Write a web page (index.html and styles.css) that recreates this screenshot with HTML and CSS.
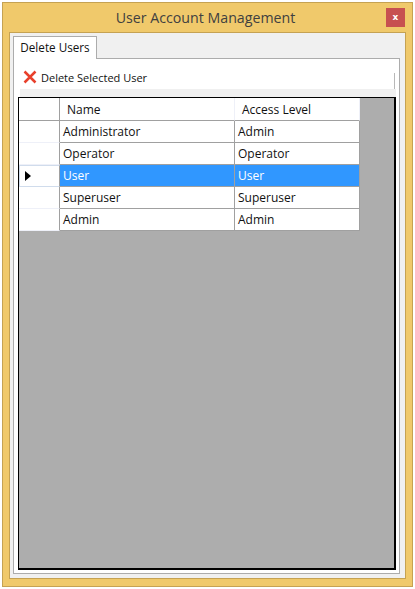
FILE: index.html
```html
<!DOCTYPE html>
<html lang="en">
  <head>
    <title>User Account Management</title>
    <meta charset="utf-8" />
    <link rel="stylesheet" href="styles.css">
  </head>
  <body>
    <div class="ablak">
      <div class="cimsor">
        <span class="cim">User Account Management</span>
        <span class="bezar">x</span>
      </div>
      <div class="tartalom">
        <div class="fulek">
          <div class="ful">Delete Users</div>
        </div>
        <div class="lap">
          <div class="eszkozsor">
            <svg class="ikon" width="14" height="14" viewBox="0 0 14 14">
              <path d="M1.5 1.5 L12.5 12.5 M12.5 1.5 L1.5 12.5" stroke="#e8402c" stroke-width="2.5" fill="none" />
            </svg>
            <span>Delete Selected User</span>
          </div>
          <div class="racs">
            <div class="sor fejlec">
              <div class="sorfej"></div>
              <div class="cella nev">Name</div>
              <div class="cella szint">Access Level</div>
            </div>
            <div class="sor">
              <div class="sorfej"></div>
              <div class="cella nev">Administrator</div>
              <div class="cella szint">Admin</div>
            </div>
            <div class="sor">
              <div class="sorfej"></div>
              <div class="cella nev">Operator</div>
              <div class="cella szint">Operator</div>
            </div>
            <div class="sor kivalasztott">
              <div class="sorfej"><span class="nyil"></span></div>
              <div class="cella nev">User</div>
              <div class="cella szint">User</div>
            </div>
            <div class="sor">
              <div class="sorfej"></div>
              <div class="cella nev">Superuser</div>
              <div class="cella szint">Superuser</div>
            </div>
            <div class="sor">
              <div class="sorfej"></div>
              <div class="cella nev">Admin</div>
              <div class="cella szint">Admin</div>
            </div>
          </div>
        </div>
      </div>
    </div>
  </body>
</html>
```

FILE: styles.css
```css
html, body {
  height: 100%;
}
body {
  margin: 0;
  padding: 2px;
  box-sizing: border-box;
  background: #fff;
  font-family: "Open Sans", "Noto Sans", sans-serif;
  font-size: 12px;
  color: #111;
}
.ablak {
  width: 411px;
  height: 585px;
  box-sizing: border-box;
  border: 1px solid #c5a253;
  background: #f0c96b;
  display: flex;
  flex-direction: column;
  padding: 0 6px 7px 6px;
}
.cimsor {
  height: 29px;
  flex: none;
  box-sizing: border-box;
  padding-right: 4px;
  display: flex;
  align-items: center;
  justify-content: center;
  position: relative;
}
.cim {
  font-size: 14.2px;
  color: #404040;
}
.bezar {
  position: absolute;
  top: 5px;
  right: 1px;
  width: 19px;
  height: 19px;
  background: #c75050;
  color: #fff;
  font-family: "DejaVu Sans", sans-serif;
  font-size: 9px;
  font-weight: bold;
  line-height: 18px;
  text-align: center;
}
.tartalom {
  flex: 1;
  min-height: 0;
  border: 1px solid #c5a253;
  background: #f0f0f0;
  padding: 3px 5px 4px 3px;
  display: flex;
  flex-direction: column;
}
.fulek {
  flex: none;
  height: 22px;
  display: flex;
}
.ful {
  width: 84px;
  height: 23px;
  box-sizing: border-box;
  border: 1px solid #acacac;
  border-bottom: none;
  background: #fff;
  text-align: center;
  font-size: 11.7px;
  line-height: 21px;
  position: relative;
  z-index: 1;
}
.lap {
  flex: 1;
  min-height: 0;
  border: 1px solid #acacac;
  background: #fff;
  padding: 0 3px 3px 4px;
  display: flex;
  flex-direction: column;
}
.eszkozsor {
  flex: none;
  box-sizing: border-box;
  height: 38px;
  margin-left: 2px;
  padding: 6px 1px 0 3px;
  display: flex;
  align-items: center;
  gap: 4px;
  font-size: 11px;
  background: #fff;
  border-bottom: 8px solid #f0f0f0;
}
.eszkozsor::after {
  content: "";
  width: 1px;
  height: 16px;
  margin-left: auto;
  align-self: flex-end;
  background: #b8b8b8;
}
.ikon {
  flex: none;
}
.racs {
  flex: 1;
  min-height: 0;
  border-style: solid;
  border-color: #000;
  border-width: 1px 2px 2px 1px;
  background: #adadad;
}
.sor {
  display: flex;
  height: 22px;
}
.fejlec {
  height: 23px;
}
.sorfej {
  width: 41px;
  flex: none;
  box-sizing: border-box;
  background: #fff;
  border-right: 1px solid #a0a0a0;
  border-bottom: 1px solid #eef0f8;
  display: flex;
  align-items: center;
  padding-left: 5px;
}
.cella {
  box-sizing: border-box;
  background: #fff;
  border-bottom: 1px solid #a0a0a0;
  border-right: 1px solid #a0a0a0;
  padding: 1px 0 0 3px;
  line-height: 20px;
  white-space: nowrap;
}
.nev {
  width: 175px;
}
.szint {
  width: 125px;
}
.fejlec .cella {
  padding: 2px 0 0 7px;
  border-right-color: #eef0f8;
  line-height: 20px;
}
.fejlec .sorfej {
  border-bottom: 1px solid #a0a0a0;
}
.kivalasztott .cella {
  background: #3097ff;
  color: #fff;
}
.kivalasztott .sorfej {
  border: 1px solid #d0dcec;
  border-right: 1px solid #a0a0a0;
}
.nyil {
  width: 0;
  height: 0;
  border-left: 6px solid #000;
  border-top: 5px solid transparent;
  border-bottom: 5px solid transparent;
}
```
